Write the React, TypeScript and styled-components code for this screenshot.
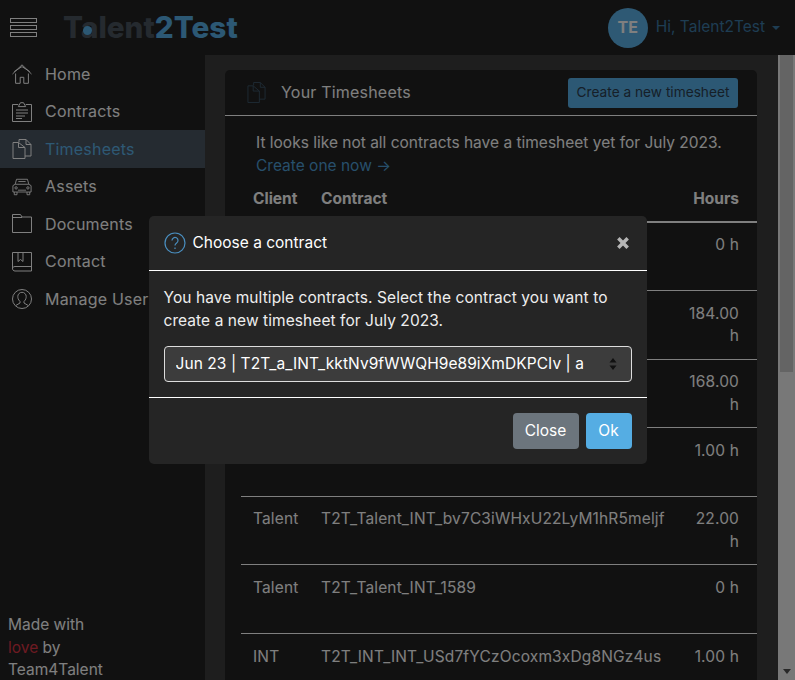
import React from 'react'
import styled, { createGlobalStyle } from 'styled-components'

const FONT = `Inter, "Open Sans", "Liberation Sans", sans-serif`

const rows = [
  { client: 'Talent', contract: 'T2T_Talent_INT_yT3kQ9fLmW2xZp8RbN4v', hours: '0 h' },
  { client: 'INT', contract: 'T2T_INT_INT_Hq7mPz2Xc9KwL4sVb1Ty', hours: '184.00 h' },
  { client: 'a', contract: 'T2T_a_INT_kktNv9fWWQH9e89iXmDKPCIv', hours: '168.00 h' },
  { client: 'INT', contract: 'T2T_INT_INT_2284', hours: '1.00 h' },
  { client: 'Talent', contract: 'T2T_Talent_INT_bv7C3iWHxU22LyM1hR5meljf', hours: '22.00 h' },
  { client: 'Talent', contract: 'T2T_Talent_INT_1589', hours: '0 h' },
  { client: 'INT', contract: 'T2T_INT_INT_USd7fYCzOcoxm3xDg8NGz4us', hours: '1.00 h' },
  { client: 'INT', contract: 'T2T_INT_INT_3312', hours: '0 h' },
]

const App = () => {
  return (
    <>
      <GlobalStyle />
      <Page>
        <TopBar>
          <Burger viewBox="0 0 27 19">
            <rect x="0.5" y="0.5" width="26" height="4" />
            <rect x="0.5" y="7.5" width="26" height="4" />
            <rect x="0.5" y="14.5" width="26" height="4" />
          </Burger>
          <Logo>
            <LogoDark>Talent</LogoDark>
            <LogoBlue>2Test</LogoBlue>
            <LogoDot />
          </Logo>
          <User>
            <Avatar>TE</Avatar>
            <UserName>Hi, Talent2Test</UserName>
            <Caret />
          </User>
        </TopBar>
        <Body>
          <Sidebar>
            <Nav>
              <NavItem>
                <NavIcon viewBox="0 0 20 20">
                  <path d="M.5 10 10 .8 19.5 10M2.2 7.6 10 2.6l7.8 5M3.6 9.5v9.8h4.6v-6h3.6v6h4.6V9.5" />
                </NavIcon>
                Home
              </NavItem>
              <NavItem>
                <NavIcon viewBox="0 0 20 20">
                  <path d="M.5 2.5h5.8M13.7 2.5h5.8v17H.5v-17M6.3 4.6 8.5.7h3l2.2 3.9zM4 8h12M4 11h12M4 14h9M4 16.5h6" />
                </NavIcon>
                Contracts
              </NavItem>
              <NavItem $active>
                <NavIcon viewBox="0 0 20 20">
                  <path d="M6.5 3.5H1v16h12v-11zM6.5 3.5v5H13M7 3V.5h7l5 5v11.5h-6M14 .5v5h5" />
                </NavIcon>
                Timesheets
              </NavItem>
              <NavItem>
                <NavIcon viewBox="0 0 22 20">
                  <path d="M3.5 7 5 1.5h12L18.500 7M1 8.500 3.500 7h15L21 8.500v7H1zM2.500 15.500v3h3v-3M16.500 15.500v3h3v-3M6.500 13.500h9M7 4h8" />
                  <circle cx="4.500" cy="11" r="1.300" />
                  <circle cx="17.500" cy="11" r="1.300" />
                </NavIcon>
                Assets
              </NavItem>
              <NavItem>
                <NavIcon viewBox="0 0 20 20">
                  <path d="M.5 3V.5h8L10 3h9.500v15.500H.5zM.5 3.500h9.500" />
                </NavIcon>
                Documents
              </NavItem>
              <NavItem>
                <NavIcon viewBox="0 0 20 20">
                  <path d="M.5 16V.5h19v18.500H3a2.500 2.500 0 0 1-2.500-3 2.500 2.500 0 0 1 2.500-1.500h16.500M6 .5v9l2.500-2 2.500 2v-9" />
                </NavIcon>
                Contact
              </NavItem>
              <NavItem>
                <NavIcon viewBox="0 0 20 20">
                  <circle cx="10" cy="10" r="9.500" />
                  <path d="M8 12.500C6 10.500 5.800 8.800 5.800 7.500a4.200 4.200 0 0 1 8.400 0c0 1.300-.2 3-2.200 5v1.500l4.200 2.500M8 12.500V14l-4.200 2.500" />
                </NavIcon>
                Manage Users
              </NavItem>
            </Nav>
            <MadeWith>
              Made with
              <br />
              <Love>love</Love> by
              <br />
              Team4Talent
            </MadeWith>
          </Sidebar>
          <Main>
            <Card>
              <CardHeader>
                <CardTitle>
                  <CardIcon viewBox="0 0 20 22">
                    <path d="M6.500 4H1v17.500h12v-12zM6.500 4v5.500H13M7 3.500V.5h7l5 5v12.500h-6M14 .5v5h5" />
                  </CardIcon>
                  Your Timesheets
                </CardTitle>
                <CreateButton>Create a new timesheet</CreateButton>
              </CardHeader>
              <CardBody>
                <Notice>
                  It looks like not all contracts have a timesheet yet for July 2023.
                  <br />
                  <NoticeLink href="#">Create one now →</NoticeLink>
                </Notice>
                <HeadRow>
                  <span>Client</span>
                  <span>Contract</span>
                  <HoursHead>Hours</HoursHead>
                </HeadRow>
                {rows.map((row) => (
                  <Row key={row.contract}>
                    <Cell>{row.client}</Cell>
                    <Cell>{row.contract}</Cell>
                    <HoursCell>{row.hours}</HoursCell>
                  </Row>
                ))}
              </CardBody>
            </Card>
          </Main>
          <ScrollTrack>
            <ScrollThumb />
            <ScrollArrow viewBox="0 0 8 5">
              <path d="M0 0h8L4 5z" />
            </ScrollArrow>
          </ScrollTrack>
        </Body>
        <Backdrop>
          <Modal>
            <ModalHeader>
              <ModalTitle>
                <HelpIcon viewBox="0 0 22 22">
                  <circle cx="11" cy="11" r="10" />
                  <path d="M8 8.500a3 3 0 1 1 4.600 2.500c-1 .7-1.600 1.200-1.600 2.500M11 15.500v1.500" />
                </HelpIcon>
                Choose a contract
              </ModalTitle>
              <CloseIcon viewBox="0 0 12 12">
                <path d="M2 2l8 8M10 2l-8 8" />
              </CloseIcon>
            </ModalHeader>
            <ModalBody>
              <ModalText>
                You have multiple contracts. Select the contract you want to create a new timesheet for July 2023.
              </ModalText>
              <SelectWrap>
                <ContractSelect defaultValue="a">
                  <option value="a">Jun 23 | T2T_a_INT_kktNv9fWWQH9e89iXmDKPCIv | a</option>
                  <option value="b">Jun 23 | T2T_INT_INT_USd7fYCzOcoxm3xDg8NGz4us | INT</option>
                </ContractSelect>
                <SelectArrows viewBox="0 0 8 12">
                  <path d="M4 0l3.500 4.500h-7zM4 12 .5 7.500h7z" />
                </SelectArrows>
              </SelectWrap>
            </ModalBody>
            <ModalFooter>
              <GreyButton>Close</GreyButton>
              <BlueButton>Ok</BlueButton>
            </ModalFooter>
          </Modal>
        </Backdrop>
      </Page>
    </>
  )
}

export default App

const GlobalStyle = createGlobalStyle`
  html, body {
    margin: 0;
    height: 100%;
    overflow: hidden;
    background: #222;
  }
  * {
    box-sizing: border-box;
  }
`
const Page = styled.div`
  height: 100vh;
  display: flex;
  flex-direction: column;
  font-family: ${FONT};
  font-size: 15.5px;
  line-height: 22.75px;
  color: #fff;
`
const TopBar = styled.div`
  height: 55px;
  flex-shrink: 0;
  display: flex;
  align-items: center;
  padding: 0 15px 0 10px;
  background: #222;
`
const Burger = styled.svg`
  width: 27px;
  height: 19px;
  margin-top: -1px;
  fill: none;
  stroke: #fff;
`
const Logo = styled.div`
  position: relative;
  margin-left: 26px;
  font-size: 29.7px;
  font-weight: 800;
`
const LogoDark = styled.span`
  color: #4a545f;
`
const LogoBlue = styled.span`
  color: #58b0e8;
`
const LogoDot = styled.span`
  position: absolute;
  left: 20px;
  top: 10px;
  width: 9px;
  height: 9px;
  border-radius: 50%;
  background: #58b0e8;
`
const User = styled.div`
  margin-left: auto;
  display: flex;
  align-items: center;
`
const Avatar = styled.div`
  width: 40px;
  height: 40px;
  border-radius: 50%;
  background: #5cb2e8;
  display: flex;
  align-items: center;
  justify-content: center;
  font-size: 16px;
  font-weight: 700;
`
const UserName = styled.span`
  margin-left: 8px;
  color: #3c7aa6;
`
const Caret = styled.span`
  margin-left: 7px;
  border-left: 4px solid transparent;
  border-right: 4px solid transparent;
  border-top: 4px solid #3c7aa6;
`
const Body = styled.div`
  flex: 1;
  min-height: 0;
  display: flex;
`
const Sidebar = styled.aside`
  width: 205px;
  flex-shrink: 0;
  display: flex;
  flex-direction: column;
  justify-content: space-between;
  background: #222;
`
const Nav = styled.nav`
  padding-top: 0;
`
const NavItem = styled.div<{ $active?: boolean }>`
  height: 37.5px;
  display: flex;
  align-items: center;
  gap: 13px;
  padding: 1px 0 0 12px;
  white-space: nowrap;
  font-size: 16px;
  letter-spacing: 0.2px;
  color: ${(p) => (p.$active ? '#5cb2e8' : '#fff')};
  background: ${(p) => (p.$active ? '#4a5662' : 'transparent')};
`
const NavIcon = styled.svg`
  width: 20px;
  height: 20px;
  flex-shrink: 0;
  fill: none;
  stroke: #fff;
  stroke-width: 1;
`
const MadeWith = styled.div`
  padding: 0 8px;
  margin-bottom: -2px;
`
const Love = styled.span`
  color: #dc3545;
`
const Main = styled.main`
  flex: 1;
  min-width: 0;
  overflow: hidden;
  padding: 15px 21px 0 20px;
  background: #3c3c3c;
`
const ScrollTrack = styled.div`
  width: 17px;
  flex-shrink: 0;
  display: flex;
  flex-direction: column;
  align-items: center;
  background: #f1f1f1;
`
const ScrollThumb = styled.div`
  width: 13px;
  height: 317px;
  background: #c8c8c8;
`
const ScrollArrow = styled.svg`
  width: 8px;
  height: 5px;
  margin-top: auto;
  margin-bottom: 6px;
  fill: #505050;
`
const Card = styled.section`
  background: #222;
  border-radius: 5px;
`
const CardHeader = styled.div`
  height: 46px;
  display: flex;
  align-items: center;
  justify-content: space-between;
  padding: 0 19px 0 22px;
  border-bottom: 1px solid #fff;
`
const CardTitle = styled.div`
  display: flex;
  align-items: center;
  gap: 15px;
  font-size: 16px;
  letter-spacing: 0.2px;
`
const CardIcon = styled.svg`
  width: 19px;
  height: 21px;
  fill: none;
  stroke: #3c5568;
  stroke-width: 1;
`
const CreateButton = styled.button`
  height: 30px;
  width: 170px;
  padding: 0;
  border: none;
  border-radius: 3px;
  background: #58b0e8;
  color: #2c3e50;
  font: inherit;
  font-size: 13.7px;
`
const CardBody = styled.div`
  padding: 16px 0 16px 16px;
`
const Notice = styled.p`
  margin: 0;
  padding-left: 15px;
`
const NoticeLink = styled.a`
  color: #4f9fd6;
  text-decoration: none;
`
const HeadRow = styled.div`
  display: grid;
  grid-template-columns: 68px 1fr 81px;
  height: 45px;
  padding: 10px 0 0 12px;
  border-bottom: 2px solid #fff;
  font-weight: 700;
`
const HoursHead = styled.span`
  padding-right: 18px;
  text-align: right;
`
const Row = styled.div`
  display: grid;
  grid-template-columns: 56px 1fr 68px;
  column-gap: 12px;
  height: 68.6px;
  padding: 11.5px 0 0 12px;
  border-bottom: 1px solid #fff;
  letter-spacing: 0.15px;
`
const Cell = styled.div`
  min-width: 0;
`
const HoursCell = styled.div`
  padding-right: 18px;
  text-align: right;
`
const Backdrop = styled.div`
  position: fixed;
  inset: 0;
  display: flex;
  align-items: center;
  justify-content: center;
  background: rgba(0, 0, 0, 0.5);
`
const Modal = styled.div`
  width: 498px;
  background: #252525;
  border-radius: 5px;
`
const ModalHeader = styled.div`
  height: 55px;
  display: flex;
  align-items: center;
  justify-content: space-between;
  padding: 0 17px 0 15px;
  border-bottom: 1px solid #fff;
`
const ModalTitle = styled.div`
  display: flex;
  align-items: center;
  gap: 7px;
`
const HelpIcon = styled.svg`
  width: 22px;
  height: 22px;
  fill: none;
  stroke: #4a8fc0;
  stroke-width: 1.2;
`
const CloseIcon = styled.svg`
  width: 14px;
  height: 14px;
  fill: none;
  stroke: #b5b5b5;
  stroke-width: 3;
`
const ModalBody = styled.div`
  padding: 16px 15px 15px;
  border-bottom: 1px solid #fff;
  letter-spacing: 0.07px;
`
const ModalText = styled.p`
  margin: 0 0 13.5px;
  color: #eee;
`
const SelectWrap = styled.div`
  position: relative;
`
const ContractSelect = styled.select`
  display: block;
  width: 100%;
  height: 36px;
  padding: 1px 30px 0 11px;
  appearance: none;
  border: 1px solid #ddd;
  border-radius: 4px;
  outline: none;
  background: #3c3c3c;
  color: #fff;
  font: inherit;
  letter-spacing: inherit;
`
const SelectArrows = styled.svg`
  position: absolute;
  right: 15px;
  top: 12px;
  width: 8px;
  height: 12px;
  fill: #111;
  pointer-events: none;
`
const ModalFooter = styled.div`
  display: flex;
  justify-content: flex-end;
  gap: 7px;
  padding: 15px;
`
const GreyButton = styled.button`
  width: 66px;
  height: 36px;
  padding: 1px 0 0;
  border: none;
  border-radius: 4px;
  background: #6c757d;
  color: #fff;
  font: inherit;
`
const BlueButton = styled(GreyButton)`
  width: 46px;
  background: #55ade3;
`
